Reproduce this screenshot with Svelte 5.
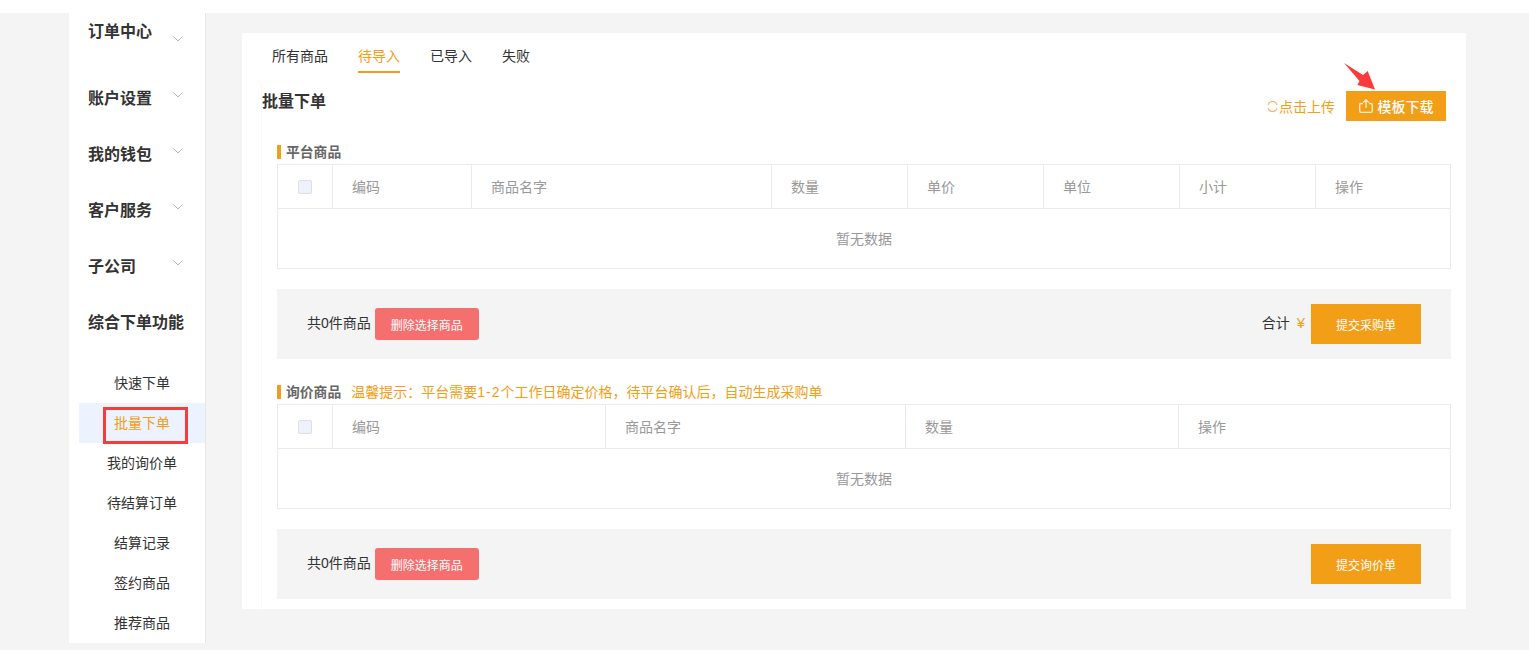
<script>
  const menus = ['账户设置', '我的钱包', '客户服务', '子公司'];
  const subs = ['快速下单', '批量下单', '我的询价单', '待结算订单', '结算记录', '签约商品', '推荐商品'];
  const tabs = ['所有商品', '待导入', '已导入', '失败'];

  const platformCols = [
    { name: '编码', width: 139 },
    { name: '商品名字', width: 300 },
    { name: '数量', width: 136 },
    { name: '单价', width: 136 },
    { name: '单位', width: 136 },
    { name: '小计', width: 136 },
    { name: '操作', width: 135 },
  ];
  const inquiryCols = [
    { name: '编码', width: 273 },
    { name: '商品名字', width: 300 },
    { name: '数量', width: 273 },
    { name: '操作', width: 272 },
  ];
</script>

{#snippet chevron()}
  <svg class="chevron" width="10" height="6" viewBox="0 0 10 6">
    <path d="M0.5 0.5 L5 5 L9.5 0.5" fill="none" stroke="#b4bccc" stroke-width="1" />
  </svg>
{/snippet}

{#snippet goodsTable(cols)}
  <table>
    <colgroup>
      <col style="width: 55px" />
      {#each cols as col}
        <col style="width: {col.width}px" />
      {/each}
    </colgroup>
    <thead>
      <tr>
        <th class="check"><span class="checkbox"></span></th>
        {#each cols as col}
          <th>{col.name}</th>
        {/each}
      </tr>
    </thead>
    <tbody>
      <tr>
        <td class="empty" colspan={cols.length + 1}>暂无数据</td>
      </tr>
    </tbody>
  </table>
{/snippet}

<div class="page">
  <aside class="sidebar">
    <div class="menu first">
      <span>订单中心</span>
      {@render chevron()}
    </div>
    {#each menus as menu}
      <div class="menu">
        <span>{menu}</span>
        {@render chevron()}
      </div>
    {/each}
    <div class="menu open"><span>综合下单功能</span></div>
    <ul class="subs">
      {#each subs as sub, i}
        <li class:active={i === 1}>{sub}</li>
      {/each}
    </ul>
    <div class="mark-box"></div>
  </aside>

  <main class="card">
    <nav class="tabs">
      {#each tabs as tab, i}
        <span class="tab" class:current={i === 1}>{tab}</span>
      {/each}
    </nav>

    <section class="body">
      <div class="head">
        <h2>批量下单</h2>
        <div class="actions">
          <span class="upload">
            <svg width="11" height="11" viewBox="0 0 11 11">
              <path d="M1 3.8 A4.7 4.7 0 0 1 10 3.8 M10 7.2 A4.7 4.7 0 0 1 1 7.2" fill="none" stroke="#f7b55a" stroke-width="1.2" />
            </svg>点击上传
          </span>
          <button class="download">
            <svg width="14" height="14" viewBox="0 0 14 14">
              <path d="M4 4.5 H2 Q0.7 4.5 0.7 5.8 V12 Q0.7 13.3 2 13.3 H12 Q13.3 13.3 13.3 12 V5.8 Q13.3 4.5 12 4.5 H10 M7 9 V0.8 M4.2 3.4 L7 0.8 L9.8 3.4" fill="none" stroke="#ffedcf" stroke-width="1.3" />
            </svg>
            模板下载
          </button>
        </div>
      </div>

      <div class="label"><b>平台商品</b></div>
      {@render goodsTable(platformCols)}
      <div class="bar">
        <span class="count">共0件商品</span>
        <button class="remove">删除选择商品</button>
        <span class="total">合计<em>¥</em></span>
        <button class="submit">提交采购单</button>
      </div>

      <div class="label second">
        <b>询价商品</b>
        <span class="hint">温馨提示：平台需要<span class="num">1-2</span>个工作日确定价格，待平台确认后，自动生成采购单</span>
      </div>
      {@render goodsTable(inquiryCols)}
      <div class="bar">
        <span class="count">共0件商品</span>
        <button class="remove">删除选择商品</button>
        <button class="submit push">提交询价单</button>
      </div>
    </section>

    <svg class="mark-arrow" width="36" height="30" viewBox="0 0 36 30">
      <path d="M1 1 L20 13 L24.7 9 L32 27.5 L14.3 23 L16.5 19 Z" fill="#fb3a3c" />
    </svg>
  </main>
</div>

<style>
  :global(body) {
    background: #fff;
    font-family: "Liberation Sans", "Noto Sans CJK SC", sans-serif;
  }

  .page {
    display: flex;
    align-items: flex-start;
    margin-top: 13px;
    height: 637px;
    padding-left: 69px;
    background: #f4f4f4;
    color: #333;
    overflow: hidden;
  }

  .sidebar {
    position: relative;
    flex: none;
    box-sizing: border-box;
    width: 137px;
    height: 630px;
    background: #fff;
    border-right: 1px solid #e6e6e6;
  }

  .menu {
    display: flex;
    align-items: center;
    justify-content: space-between;
    height: 56px;
    padding: 0 22px 0 19px;
    font-size: 16px;
    font-weight: 700;
    color: #333;
    white-space: nowrap;
  }

  .menu span {
    padding-bottom: 2px;
  }

  .menu.first {
    align-items: flex-start;
    height: 57px;
  }

  .menu.first span {
    margin-top: 7px;
    padding-bottom: 0;
    line-height: 24px;
  }

  .menu.first .chevron {
    margin-top: 23px;
  }

  .menu .chevron {
    margin-top: -6px;
  }

  .menu.open {
    justify-content: flex-start;
  }

  .subs {
    list-style: none;
    margin: 13px 0 0 10px;
    padding: 0;
  }

  .subs li {
    height: 40px;
    line-height: 40px;
    font-size: 14px;
    text-align: center;
    color: #333;
  }

  .subs li.active {
    background: #ecf3fe;
    color: #f39e17;
  }

  .mark-box {
    position: absolute;
    left: 34px;
    top: 394px;
    box-sizing: border-box;
    width: 85px;
    height: 37px;
    border: 3px solid #f93a3f;
  }

  .card {
    position: relative;
    flex: none;
    box-sizing: border-box;
    width: 1224px;
    height: 576px;
    margin: 20px 0 0 36px;
    background: #fff;
  }

  .tabs {
    display: flex;
    gap: 30px;
    padding: 13px 0 0 30px;
  }

  .tab {
    padding-bottom: 4px;
    border-bottom: 2px solid transparent;
    font-size: 14px;
    line-height: 21px;
    color: #333;
  }

  .tab.current {
    border-bottom-color: #f39e17;
    color: #f39e17;
  }

  .body {
    box-sizing: border-box;
    width: 1205px;
    height: 526px;
    margin: 10px 0 0 19px;
    padding: 8px 0 0 15px;
    border-left: 1px solid #f8f8f8;
  }

  .head {
    display: flex;
    justify-content: space-between;
    margin-left: -15px;
    padding-right: 20px;
  }

  h2 {
    margin: 1px 0 0;
    font-size: 16px;
    font-weight: 700;
    line-height: 20px;
    color: #333;
  }

  .actions {
    display: flex;
    align-items: center;
    gap: 11px;
  }

  .upload {
    display: flex;
    align-items: center;
    gap: 1px;
    font-size: 14px;
    color: #f39e17;
  }

  .download {
    display: flex;
    align-items: center;
    justify-content: center;
    gap: 5px;
    width: 100px;
    height: 30px;
    padding: 0;
    border: 0;
    background: #f39e17;
    color: #fff;
    font: inherit;
    font-size: 14px;
    font-weight: 500;
  }

  .label {
    display: flex;
    align-items: center;
    gap: 10px;
    height: 14px;
    margin: 24px 0 5px;
    padding-left: 5px;
    border-left: 4px solid #f39e17;
    font-size: 14px;
    line-height: 14px;
  }

  .label.second {
    margin-top: 26px;
  }

  .label b {
    padding-top: 2px;
    font-weight: 700;
    font-size: 13.8px;
    color: #666;
  }

  .hint {
    color: #f39e17;
  }

  .num {
    letter-spacing: 1px;
  }

  table {
    width: 1173px;
    table-layout: fixed;
    border-collapse: collapse;
    font-size: 14px;
  }

  th,
  td {
    padding: 0;
    border: 1px solid #e9ebf3;
    color: #999;
    font-weight: 400;
  }

  th {
    height: 41px;
    padding: 0 0 2px 19px;
    text-align: left;
  }

  th.check {
    padding: 0;
    text-align: center;
  }

  .checkbox {
    display: block;
    box-sizing: border-box;
    width: 14px;
    height: 14px;
    margin: 0 auto;
    background: #edf2fc;
    border: 1px solid #dcdfe6;
    border-radius: 2px;
  }

  .empty {
    height: 57px;
    padding-bottom: 2px;
    text-align: center;
  }

  .bar {
    display: flex;
    align-items: center;
    width: 1174px;
    height: 70px;
    margin-top: 20px;
    padding: 0 30px;
    box-sizing: border-box;
    background: #f4f4f4;
    font-size: 14px;
  }

  .bar button {
    padding: 0;
    border: 0;
    color: #fff;
    font: inherit;
    font-size: 12px;
  }

  .count {
    margin-right: 4px;
    padding-bottom: 4px;
  }

  .bar .remove {
    width: 104px;
    height: 32px;
    border-radius: 3px;
    background: #f66f6f;
  }

  .total {
    margin-left: auto;
    margin-right: 6px;
    padding-bottom: 4px;
  }

  .total em {
    margin-left: 7px;
    font-size: 15px;
    font-style: normal;
    color: #f39e17;
  }

  .bar .submit {
    width: 110px;
    height: 40px;
    background: #f39e17;
  }

  .bar .submit.push {
    margin-left: auto;
  }

  .mark-arrow {
    position: absolute;
    left: 1101px;
    top: 29px;
  }
</style>
